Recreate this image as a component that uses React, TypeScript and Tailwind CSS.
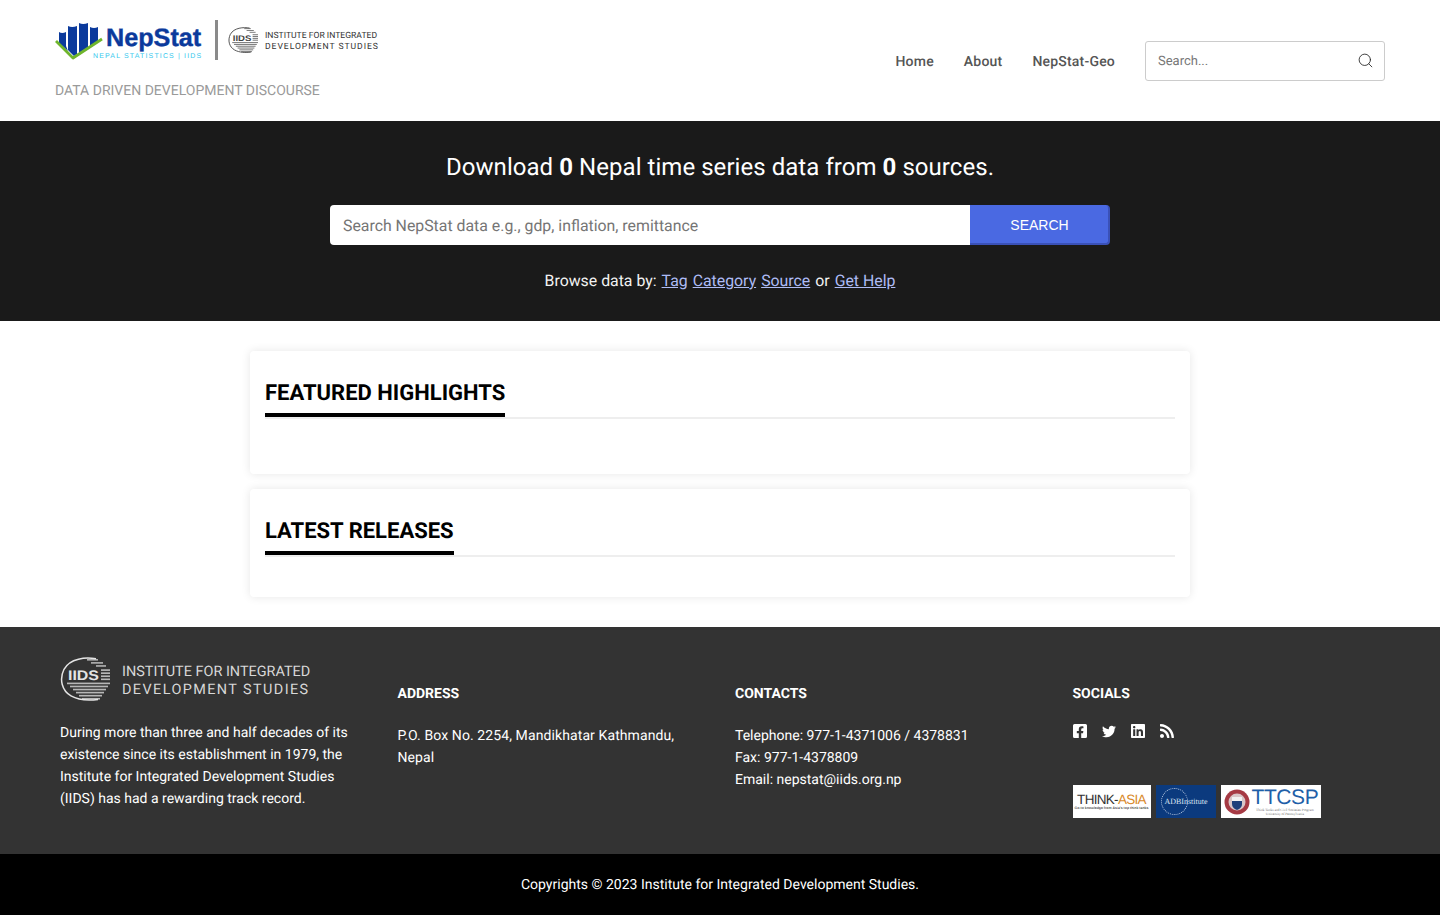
import React from 'react';
import { Search } from 'lucide-react';
import { FaFacebookSquare, FaLinkedin, FaRss, FaTwitter } from 'react-icons/fa';

const IidsMark = ({ color, width, height }: { color: string; width: number; height: number }) => (
  <svg width={width} height={height} viewBox="0 0 50 43" fill="none" preserveAspectRatio="none">
    <path d="M36 1.8 C26 0 10 1 4 12 C-1 22 2 33 11 38 C19 42.5 30 42.5 38 41.5" stroke={color} strokeWidth="1.5" />
    <rect x="27" y="2" width="11" height="1.5" fill={color} opacity="0.75" />
    <rect x="31" y="5" width="12" height="1.5" fill={color} opacity="0.75" />
    <rect x="36" y="8" width="10" height="1.5" fill={color} opacity="0.75" />
    {[12, 15, 18, 21].map((y) => (
      <rect key={y} x="41" y={y} width="9" height="1.6" fill={color} opacity="0.75" />
    ))}
    {[25, 28, 31, 34, 37, 40].map((y, i) => (
      <rect key={y} x={7 + i * 3} y={y} width={43 - i * 5} height="1.6" fill={color} opacity="0.75" />
    ))}
    <text x="8" y="22.5" fontFamily="'Liberation Sans', sans-serif" fontWeight="700" fontSize="13.5" textLength="31" lengthAdjust="spacingAndGlyphs" fill={color}>
      IIDS
    </text>
  </svg>
);

const NepStatLogo = () => (
  <svg width="150" height="42" viewBox="0 0 150 42" fill="none">
    <g fill="#0b3a9c" transform="translate(0 1)">
      <path d="M4 12 Q7 14 11 12 L11 26 L13 31 L4 23 Z" />
      <path d="M13 6 Q17 8 22 6 L22 34 L19 36 L13 30 Z" />
      <path d="M24 3 Q28 5 33 3 L33 28 L24 33 Z" />
      <path d="M35 7 Q39 9 43 7 L43 21 L35 27 Z" />
    </g>
    <path d="M1 22 L18 39 L47 20" stroke="#6fb52c" strokeWidth="2.8" strokeLinejoin="round" />
    <text x="51" y="27" fontFamily="'Liberation Sans', sans-serif" fontWeight="700" fontSize="25.2" fill="#0b3a9c" stroke="#0b3a9c" strokeWidth="0.4">
      NepStat
    </text>
    <text x="38" y="38.5" fontFamily="'Liberation Sans', sans-serif" fontSize="7" fill="#35c8ee" letterSpacing="1.15">
      NEPAL STATISTICS | IIDS
    </text>
  </svg>
);

const SectionCard = ({ title, className }: { title: string; className: string }) => (
  <section className={`rounded bg-white px-[15px] pt-[28px] shadow-[0_0_10px_rgba(0,0,0,0.1)] ${className}`}>
    <div className="border-b-2 border-[#eeeeee]">
      <h2 className="inline-block border-b-4 border-black pb-[4px] align-bottom text-[22px] leading-[30px] font-bold text-black">{title}</h2>
    </div>
  </section>
);

const FooterHeading = ({ children }: { children: React.ReactNode }) => (
  <h5 className="text-sm leading-[22px] font-bold text-white">{children}</h5>
);

const SocialIcon = ({ children }: { children: React.ReactNode }) => (
  <span className="flex h-[14px] w-[14px] items-center justify-center">{children}</span>
);

const PartnerLogos = () => (
  <div className="mt-[47px] flex gap-[5px]">
    <div className="flex h-[33px] w-[78px] flex-col items-center justify-center bg-white">
      <span className="font-['Liberation_Sans',sans-serif] text-[13.5px] leading-[13px] tracking-[-0.7px] text-[#333]">
        THINK-<span className="text-[#d98a2b]">ASIA</span>
      </span>
      <span className="font-['Liberation_Sans',sans-serif] text-[3.5px] leading-[4px] font-bold text-[#555]">Go-to knowledge from Asia's top think tanks</span>
    </div>
    <div className="relative flex h-[33px] w-[60px] items-center justify-center bg-[#0b3a7e] pl-[1px]">
      <div className="absolute top-[3px] left-[5px] h-[27px] w-[27px] rounded-full border border-dotted border-[#b9c8e0]" />
      <span className="font-['Liberation_Serif',serif] text-[8px] text-[#dbe4f2]">ADBInstitute</span>
    </div>
    <div className="flex h-[33px] w-[100px] items-center gap-[2px] bg-white pl-[3px]">
      <svg width="26" height="26" viewBox="0 0 26 26" className="shrink-0">
        <circle cx="13" cy="13" r="12.5" fill="#a63a44" />
        <circle cx="13" cy="13" r="8.5" fill="#d9c6c8" />
        <path d="M8 8 H18 V15 Q18 19 13 21 Q8 19 8 15 Z" fill="#1f3f7a" />
        <path d="M8 8 H18 V12 H8 Z" fill="#f2f2f2" />
      </svg>
      <div className="flex flex-col items-center">
        <span className="font-['Liberation_Sans',sans-serif] text-[21px] leading-[20px] tracking-[-0.4px] text-[#1f5fa8]">TTCSP</span>
        <span className="font-['Liberation_Serif',serif] text-[3.5px] leading-[4px] whitespace-nowrap text-[#666]">Think Tanks and Civil Societies Program</span>
        <span className="font-['Liberation_Serif',serif] text-[3.5px] leading-[4px] whitespace-nowrap text-[#666]">University of Pennsylvania</span>
      </div>
    </div>
  </div>
);

export default function App() {
  return (
    <div className="min-h-[915px] bg-white font-['Roboto',sans-serif] antialiased [text-rendering:geometricPrecision]">
      <header className="flex h-[121px] items-start justify-between px-[55px]">
        <div className="pt-[20px]">
          <div className="flex h-[40px] items-center">
            <NepStatLogo />
            <div className="mr-[10px] ml-[10px] h-[40px] w-[3px] bg-[#8a8a8a]" />
            <IidsMark color="#444444" width={30} height={26} />
            <div className="ml-[7px] pt-[3px] text-[8.6px] leading-[11px] text-[#333]">
              <div>INSTITUTE FOR INTEGRATED</div>
              <div className="tracking-[0.95px]">DEVELOPMENT STUDIES</div>
            </div>
          </div>
          <p className="mt-[21px] text-sm leading-5 text-[#9a9a9a]">DATA DRIVEN DEVELOPMENT DISCOURSE</p>
        </div>
        <div className="flex items-center pt-[41px]">
          <nav className="flex gap-[30px] pt-[2px] text-sm font-medium tracking-[0.2px] text-[#555]">
            <a>Home</a>
            <a>About</a>
            <a>NepStat-Geo</a>
          </nav>
          <div className="ml-[30px] flex h-[40px] w-[240px] items-center justify-between rounded-[3px] border border-[#cccccc] pr-[10px] pl-[12px]">
            <span className="pt-[2px] text-[13px] text-[#777]">Search...</span>
            <Search size={17} strokeWidth={1.2} color="#222" className="-mt-[1px]" />
          </div>
        </div>
      </header>

      <section className="flex h-[200px] flex-col items-center bg-[#1a1a1a] pt-[29px] text-white">
        <h1 className="text-2xl leading-[34px] tracking-[0.05px]">
          Download <strong>0</strong> Nepal time series data from <strong>0</strong> sources.
        </h1>
        <div className="mt-[21px] flex h-[40px] w-[780px]">
          <div className="flex flex-1 items-center rounded-l bg-white pt-[1px] pl-[13px] text-[15.85px] text-[#757575]">
            Search NepStat data e.g., gdp, inflation, remittance
          </div>
          <button className="w-[140px] rounded-r border-r-2 border-b-2 border-[#3a51b8] bg-[#4a69e2] pt-[1px] pl-[1px] font-['Liberation_Sans',sans-serif] text-sm text-white">
            SEARCH
          </button>
        </div>
        <p className="mt-[24px] flex gap-[5px] text-[15.85px] leading-[24px] text-[#f2f2f2]">
          <span>Browse data by:</span>
          <a className="text-[#aebcf5] underline">Tag</a>
          <a className="text-[#aebcf5] underline">Category</a>
          <a className="text-[#aebcf5] underline">Source</a>
          <span>or</span>
          <a className="text-[#aebcf5] underline">Get Help</a>
        </p>
      </section>

      <main className="mx-auto flex w-[940px] flex-col gap-[15px] py-[30px]">
        <SectionCard title="FEATURED HIGHLIGHTS" className="h-[123px]" />
        <SectionCard title="LATEST RELEASES" className="h-[108px]" />
      </main>

      <footer className="grid h-[227px] grid-cols-4 bg-[#333333] px-[45px] text-sm text-white">
        <div className="px-[15px] pt-[30px]">
          <div className="flex h-[44px] items-center gap-[12px]">
            <IidsMark color="#e4e4e4" width={50} height={44} />
            <div className="pt-[4px] text-[14.45px] leading-[18px] text-[#d8d8d8]">
              <div>INSTITUTE FOR INTEGRATED</div>
              <div className="tracking-[1.4px]">DEVELOPMENT STUDIES</div>
            </div>
          </div>
          <p className="mt-[21px] leading-[22px]">
            During more than three and half decades of its existence since its establishment in 1979, the Institute for Integrated Development Studies (IIDS) has had a rewarding track record.
          </p>
        </div>
        <div className="px-[15px] pt-[56px]">
          <FooterHeading>ADDRESS</FooterHeading>
          <p className="mt-[20px] leading-[22px] tracking-[0.1px]">P.O. Box No. 2254, Mandikhatar Kathmandu, Nepal</p>
        </div>
        <div className="px-[15px] pt-[56px]">
          <FooterHeading>CONTACTS</FooterHeading>
          <div className="mt-[20px] leading-[22px]">
            <p>Telephone: 977-1-4371006 / 4378831</p>
            <p>Fax: 977-1-4378809</p>
            <p>Email: nepstat@iids.org.np</p>
          </div>
        </div>
        <div className="px-[15px] pt-[56px]">
          <FooterHeading>SOCIALS</FooterHeading>
          <div className="mt-[19px] flex h-[14px] gap-[15px] text-white">
            <SocialIcon><FaFacebookSquare size={16} /></SocialIcon>
            <SocialIcon><FaTwitter size={15} /></SocialIcon>
            <SocialIcon><FaLinkedin size={16} /></SocialIcon>
            <SocialIcon><FaRss size={16} /></SocialIcon>
          </div>
          <PartnerLogos />
        </div>
      </footer>
      <div className="flex h-[61px] items-center justify-center bg-black pt-[1px] text-sm text-white">
        Copyrights © 2023 Institute for Integrated Development Studies.
      </div>
    </div>
  );
}
